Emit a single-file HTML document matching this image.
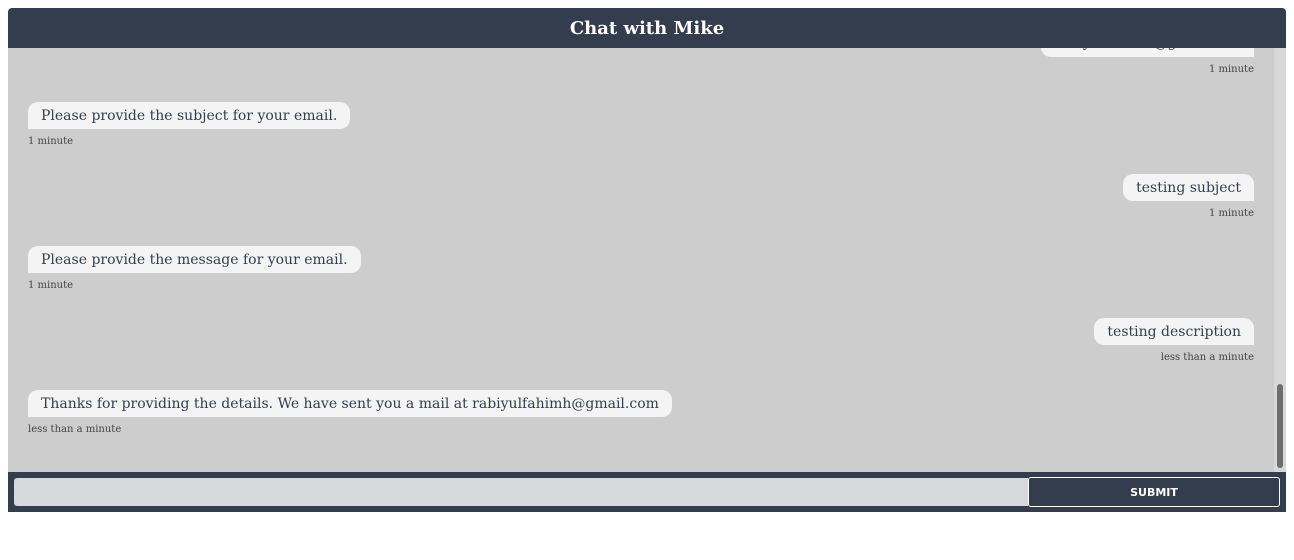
<!DOCTYPE html>
<html><head><style>
body{margin:0;background:#fff;width:1294px;height:560px;overflow:hidden;font-family:"DejaVu Serif","Liberation Serif",serif;}
.hdr{position:absolute;left:8px;top:8px;width:1278px;height:40px;background:#343d4e;border-radius:4px 4px 0 0;color:#fff;font-weight:bold;font-size:18px;text-align:center;line-height:42px;z-index:2}
.chat{position:absolute;left:8px;top:48px;width:1278px;height:424px;background:#cdcdcd;overflow:hidden}
.track{position:absolute;right:0;top:0;width:12px;height:424px;background:#d8d8d8}
.thumb{position:absolute;right:3px;top:336px;width:6px;height:84px;background:#6e6e6e;border-radius:3px}
.b{position:absolute;height:27px;line-height:29px;padding:0 13px;background:#f4f4f4;color:#343d4e;font-size:14px;white-space:nowrap}
.l{left:20px;border-radius:10px 10px 10px 0}
.r{right:32px;border-radius:10px 10px 0 10px}
.t{position:absolute;font-size:10px;color:#444;white-space:nowrap}
.tl{left:20px}.tr{right:32px}
.ftr{position:absolute;left:8px;top:472px;width:1278px;height:40px;background:#343d4e}
.inp{position:absolute;left:6px;top:6px;width:1014px;height:28px;background:#d6d8dc;border-radius:3px 0 0 3px}
.btn{position:absolute;left:1020px;top:5px;width:250px;height:28px;border:1px solid #fff;border-radius:3px;color:#fff;font-family:"DejaVu Sans",sans-serif;font-weight:bold;font-size:11px;text-align:center;line-height:30px}
</style></head><body>
<div class="hdr">Chat with Mike</div>
<div class="chat">
<div class="b r" style="top:-18px;line-height:26px">rabiyulfahimh@gmail.com</div>
<div class="t tr" style="top:16px">1 minute</div>
<div class="b l" style="top:54px">Please provide the subject for your email.</div>
<div class="t tl" style="top:88px">1 minute</div>
<div class="b r" style="top:126px">testing subject</div>
<div class="t tr" style="top:160px">1 minute</div>
<div class="b l" style="top:198px">Please provide the message for your email.</div>
<div class="t tl" style="top:232px">1 minute</div>
<div class="b r" style="top:270px">testing description</div>
<div class="t tr" style="top:304px">less than a minute</div>
<div class="b l" style="top:342px">Thanks for providing the details. We have sent you a mail at rabiyulfahimh@gmail.com</div>
<div class="t tl" style="top:376px">less than a minute</div>
<div class="track"><div class="thumb"></div></div>
</div>
<div class="ftr"><div class="inp"></div><div class="btn">SUBMIT</div></div>
</body></html>
